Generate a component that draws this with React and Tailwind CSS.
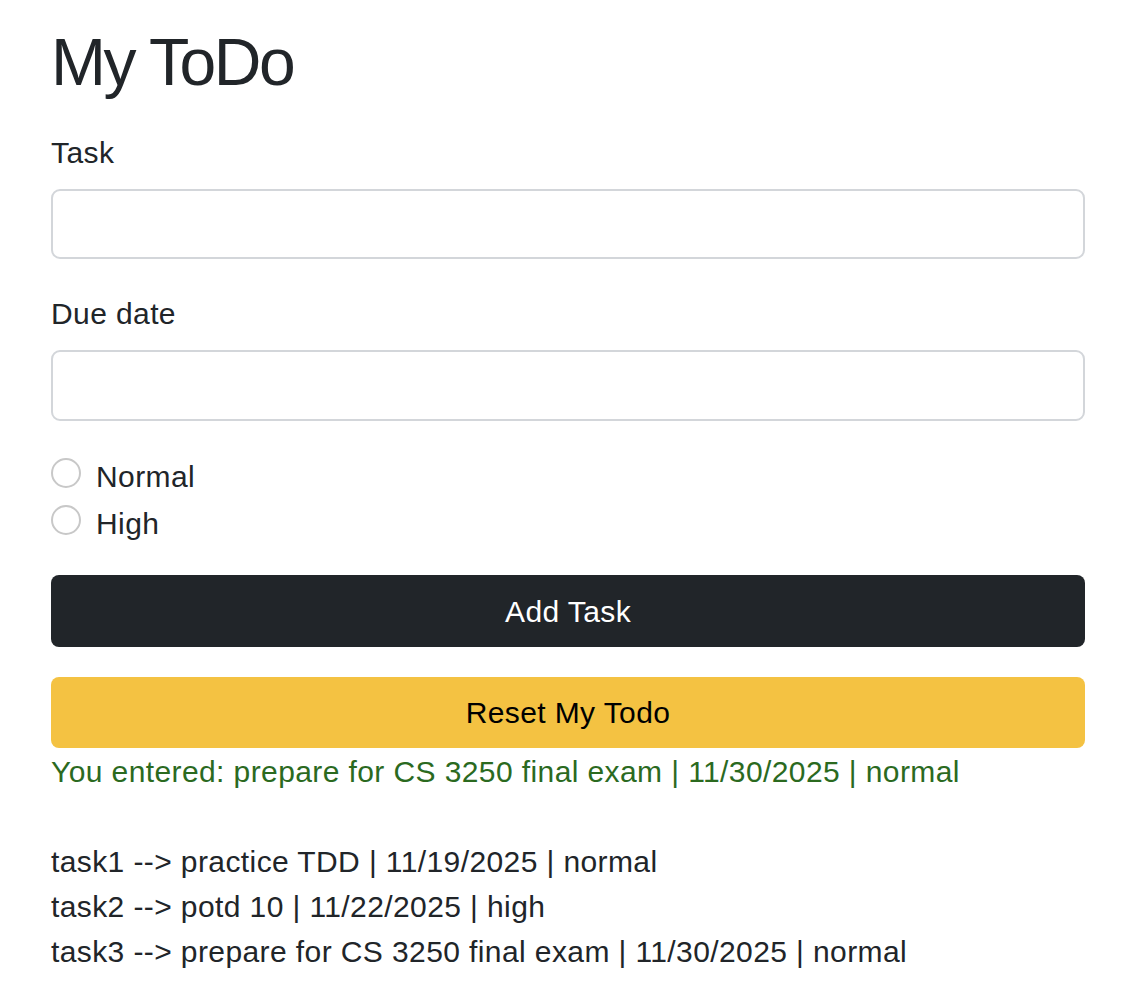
import { useState } from "react"

const tareas = [
  "task1 --> practice TDD | 11/19/2025 | normal",
  "task2 --> potd 10 | 11/22/2025 | high",
  "task3 --> prepare for CS 3250 final exam | 11/30/2025 | normal",
]

const Radio = ({ label, name }) => (
  <label className="flex items-center h-[45px] mb-[2px] cursor-pointer">
    <input type="radio" name={name} className="peer sr-only" />
    <span className="w-[30px] h-[30px] rounded-full border-2 border-[#c8c8c8] bg-white -mt-[8px]"></span>
    <span className="ml-[15px]">{label}</span>
  </label>
)

const App = () => {
  const [task, setTask] = useState('')
  const [fecha, setFecha] = useState('')

  return (
    <div className="min-h-screen bg-white text-[#212529] text-[30px] leading-[45px] tracking-[0.4px] font-['Liberation_Sans',Arial,sans-serif] pl-[51px] pr-[56px]">
      <h1 className="text-[66px] leading-[79px] tracking-[-2.4px] pt-[23px]">My ToDo</h1>

      <form onSubmit={e => e.preventDefault()}>
        <label className="block mt-[28px]">Task</label>
        <input
          className="block w-full h-[70px] mt-[14px] border-2 border-[#d3d6da] rounded-[9px] px-4 focus:outline-none"
          type="text"
          value={task}
          onChange={e => setTask(e.target.value)}
        />

        <label className="block mt-[32px]">Due date</label>
        <input
          className="block w-full h-[71px] mt-[14px] border-2 border-[#d3d6da] rounded-[9px] px-4 focus:outline-none"
          type="text"
          value={fecha}
          onChange={e => setFecha(e.target.value)}
        />

        <div className="mt-[33px]">
          <Radio label="Normal" name="prioridad" />
          <Radio label="High" name="prioridad" />
        </div>

        <button
          type="submit"
          className="block w-full h-[72px] mt-[29px] bg-[#212529] text-white rounded-[8px]"
        >
          Add Task
        </button>
      </form>

      <button className="block w-full h-[71px] mt-[30px] bg-[#f4c242] text-black rounded-[8px]">
        Reset My Todo
      </button>
      <p className="text-[#2b6a1f] mt-[1px]">You entered: prepare for CS 3250 final exam | 11/30/2025 | normal</p>

      <div className="mt-[45px]">
        {tareas.map(t => (
          <div key={t}>{t}</div>
        ))}
      </div>
    </div>
  )
}

export default App
